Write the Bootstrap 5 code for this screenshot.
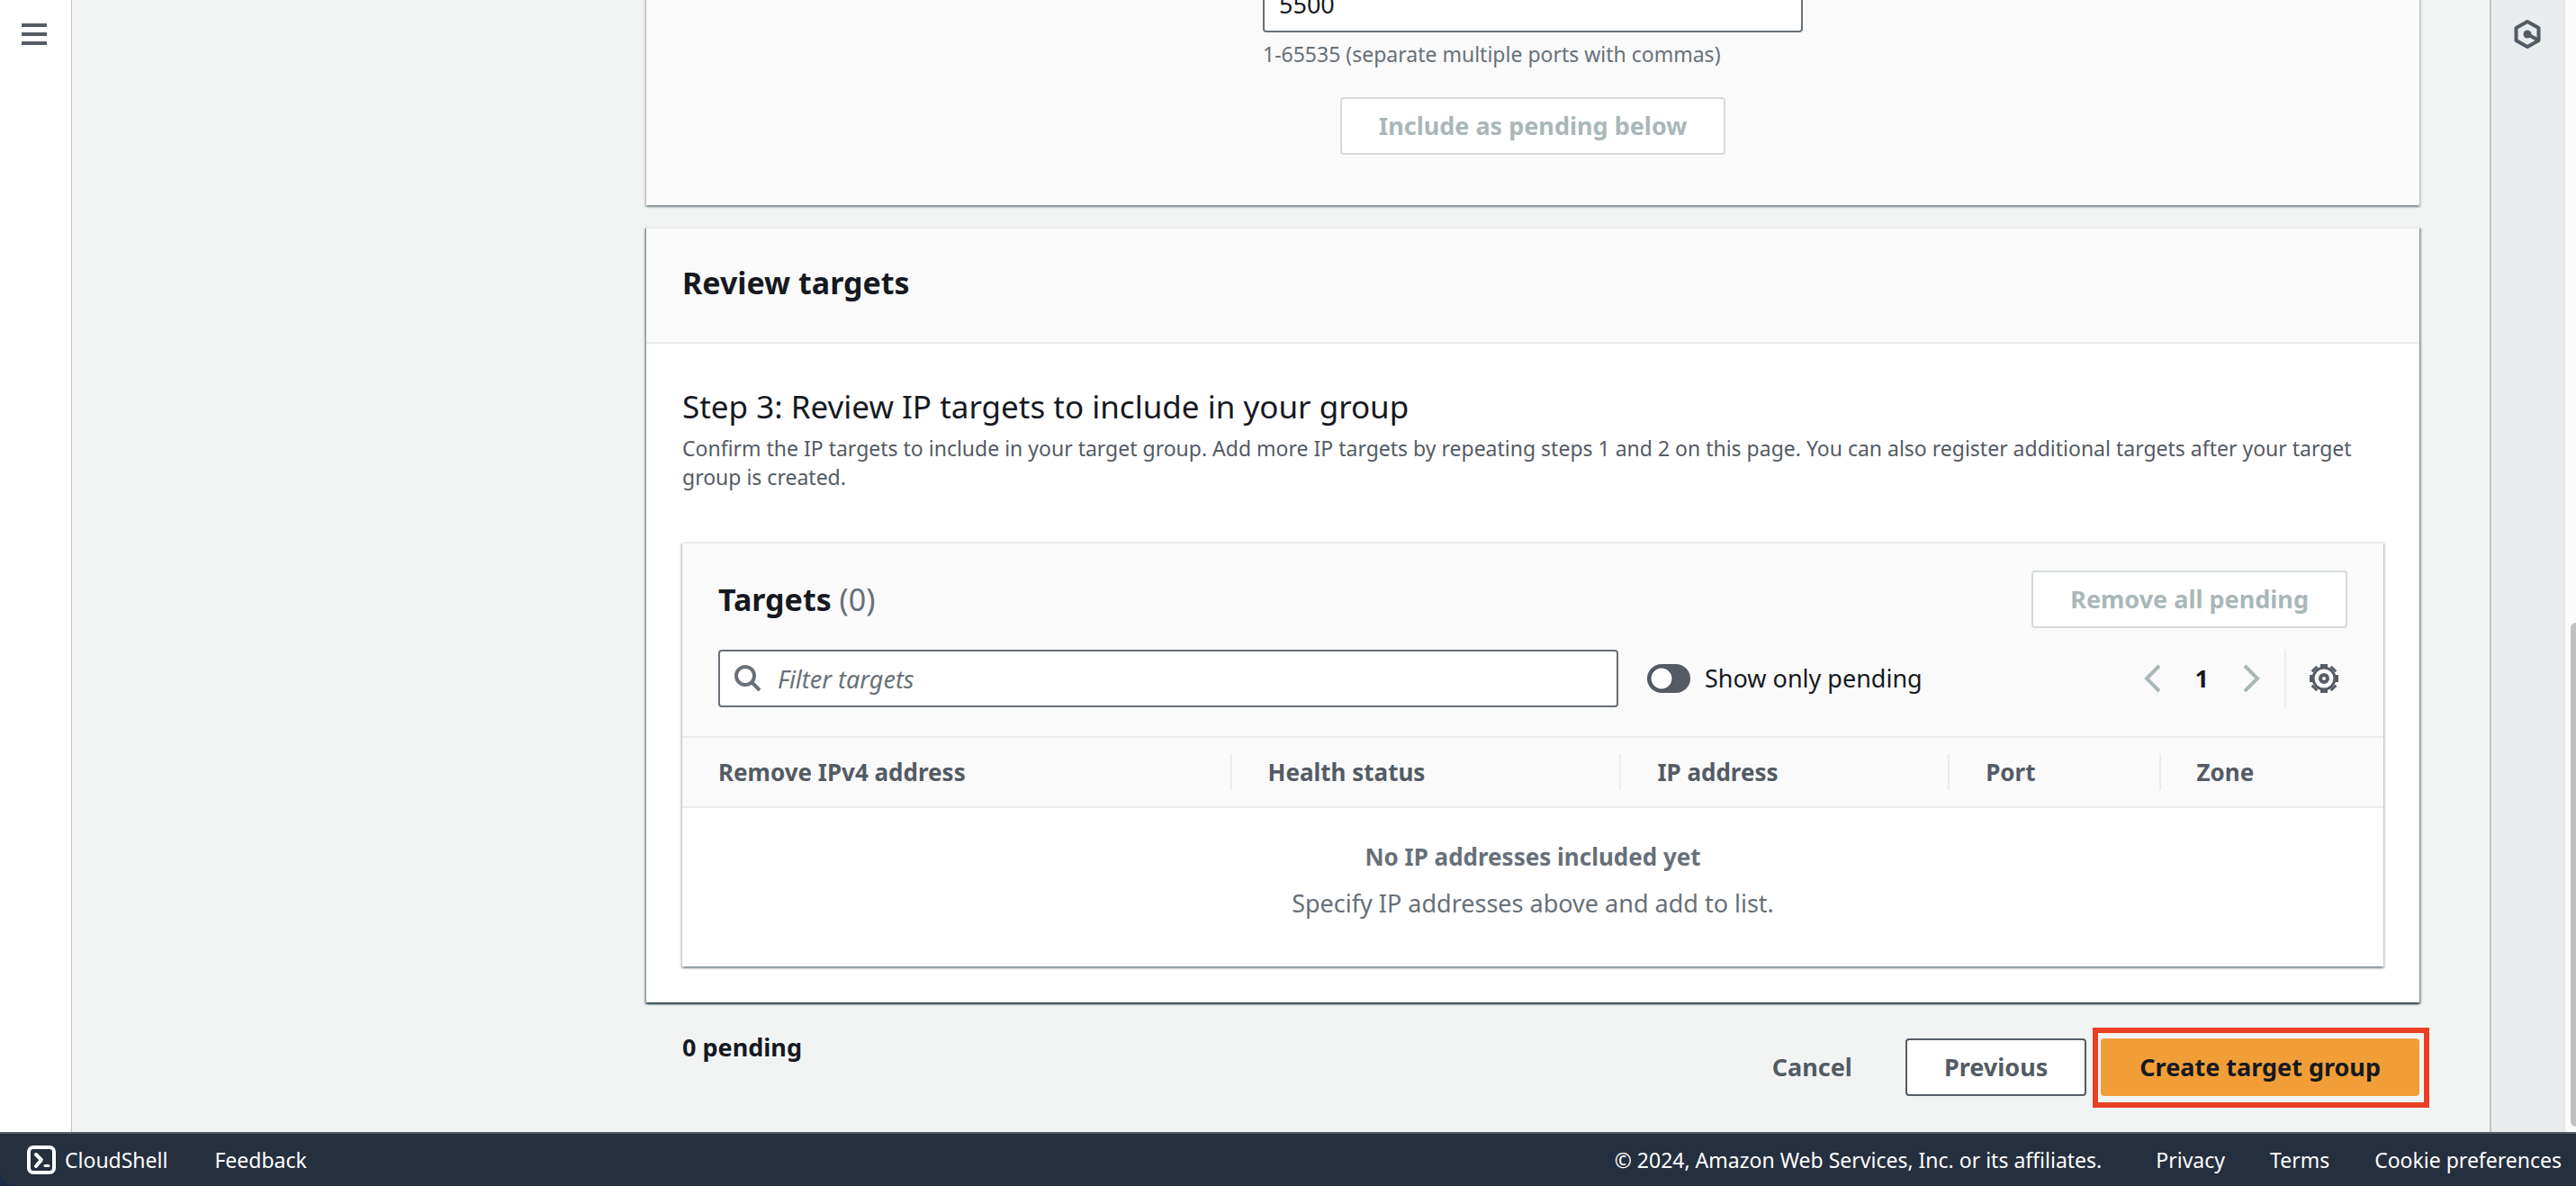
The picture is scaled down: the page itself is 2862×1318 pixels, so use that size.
<!DOCTYPE html>
<html lang="en">
<head>
<meta charset="utf-8">
<meta name="viewport" content="width=device-width, initial-scale=1">
<title>Create target group | EC2</title>
<link href="https://cdn.jsdelivr.net/npm/bootstrap@5.3.0/dist/css/bootstrap.min.css" rel="stylesheet">
<style>
  :root { --ink: #16191f; --slate: #545b64; --muted-ink: #687078; --line: #eaeded; --off: #aab7b8; }
  body { font-family: "Noto Sans", "Open Sans", sans-serif; font-size: 27px; line-height: 40px; color: var(--ink); background: #f2f4f4; }
  h2, h3 { font-size: 34px; line-height: 44px; margin: 0; }
  svg { display: block; flex: none; }

  .rail-left { flex: 0 0 80px; background: #fff; border-right: 1px solid #bcc2c3; padding: 22px 0 0 22px; }
  .rail-right { flex: 0 0 82px; background: #eaeded; border-left: 2px solid #c3c8c8; padding: 20px 0 0 24px; }
  .scroll-track { flex: 0 0 14px; background: #fafafa; border-left: 2px solid #e8e8e8; padding: 692px 0 6px 6px; }
  .scroll-thumb { height: 100%; background: #c1c1c1; border-radius: 8px 0 0 8px; }
  .icon-btn { border: 0; padding: 0; background: none; color: var(--slate); display: block; }

  .steps-space { flex: 0 0 560px; }
  .wizard { padding: 0 78px 40px 78px; }

  .panel { background: #fff; border-top: 2px solid var(--line);
    box-shadow: 0 2px 2px rgba(0,28,36,.3), 2px 2px 2px rgba(0,28,36,.15), -2px 2px 2px rgba(0,28,36,.15); }
  .panel-deep { box-shadow: 0 2px 2px rgba(0,28,36,.5), 2px 2px 2px rgba(0,28,36,.3), -2px 2px 2px rgba(0,28,36,.3), 0 1px 1px rgba(0,28,36,.4); }
  .panel-tint { background: #fafafa; }
  .panel-top { background: #fafafa; border-bottom: 2px solid var(--line); }

  .aws-field { height: 64px; border: 2px solid var(--muted-ink); border-radius: 4px; background: #fff; color: var(--ink); font-size: 27px; padding: 0 16px; }
  .port-box { width: 600px; }
  .hint { font-size: 23px; line-height: 32px; color: var(--muted-ink); }
  .lede { font-size: 23px; line-height: 32px; color: var(--slate); padding-top: 8px; }
  .step-title { font-size: 35px; }

  .aws-btn { height: 64px; border: 2px solid var(--slate); border-radius: 4px; background: #fff; color: var(--slate); font-size: 27px; line-height: 40px; font-weight: 700; padding: 10px 41px; white-space: nowrap; }
  .aws-btn:disabled { background: #fff; border-color: #d5dbdb; color: var(--off); opacity: 1; }
  .aws-btn-plain { background: none; border-color: transparent; }
  .aws-btn-main { background: #f19e38; border-color: #f19e38; color: var(--ink); }
  .spotlight { position: relative; }
  .spotlight::after { content: ""; position: absolute; inset: -14px -13px -15px -11px; border: 6px solid #ea4025; pointer-events: none; }

  .include-row { padding: 32px 0 56px; }
  .review-head { padding: 38px 40px 44px; }
  .review-body { padding: 48px 40px 40px; }
  .targets-panel { margin-top: 56px; }
  .targets-head { padding: 30px 40px 32px; }
  .count { color: var(--muted-ink); }
  .filter-row { padding-top: 24px; }

  .search-wrap { flex: 0 0 1000px; }
  .search-wrap .aws-field { padding-left: 64px; width: 100%; }
  .search-wrap .aws-field::placeholder { color: var(--muted-ink); font-style: italic; opacity: 1; }
  .search-wrap svg { position: absolute; left: 18px; top: 17px; color: var(--muted-ink); }

  .pending-switch { min-height: 0; padding: 0; margin: 0 0 0 32px; gap: 16px; }
  .pending-switch .form-check-input { width: 48px; height: 32px; margin: 0; border: 0; border-radius: 16px; float: none; box-shadow: none;
    background: radial-gradient(circle at 16px 16px, #fff 11px, #414750 12px, transparent 13px) var(--slate); }
  .pager { color: var(--off); }
  .page-no { padding: 0 38px; }
  .gear-side { border-left: 2px solid var(--line); height: 64px; padding: 16px 10px 0 26px; margin-left: 26px; }

  .target-table { width: 100%; table-layout: fixed; border-collapse: collapse; font-size: 26px; }
  .target-table th { background: #fafafa; color: var(--slate); padding: 18px 0; line-height: 40px; border-bottom: 2px solid var(--line); }
  .target-table th div { padding-left: 40px; }
  .target-table th + th div { border-left: 2px solid var(--line); }
  .target-table td { text-align: center; color: var(--muted-ink); padding: 34px 0 50px; }
  .empty-note { padding-top: 12px; font-size: 27px; }

  .wizard-actions { padding-top: 40px; }
  .pending-count { padding-left: 40px; margin-top: -10px; }

  .page-shell { background: #1c2a4a; }
  .page-body { background: #f2f4f4; }
  .console-foot { background: #262f3e; border-top: 2px solid var(--slate); border-bottom-left-radius: 16px; height: 60px; font-size: 23px; line-height: 32px; color: #fff; padding: 0 16px 0 30px; }
  .console-foot a { color: #fff; text-decoration: none; }
  .shell-link { gap: 10px; }
  .feedback-link { margin-left: 52px; }
  .legal { gap: 50px; }
  .copyright { padding-right: 10px; }
</style>
</head>
<body>
<div class="page-shell d-flex flex-column vh-100 overflow-hidden">
  <div class="page-body d-flex flex-grow-1 overflow-hidden">
    <nav class="rail-left">
      <button type="button" class="icon-btn" aria-label="Open navigation">
        <svg width="32" height="32" viewBox="0 0 32 32" fill="currentColor"><path d="M2 4h28v4H2zM2 14h28v4H2zM2 24h28v4H2z"/></svg>
      </button>
    </nav>

    <main class="d-flex flex-grow-1 overflow-hidden">
      <div class="steps-space"></div>
      <div class="wizard flex-grow-1 d-flex flex-column justify-content-end">

        <section class="panel panel-tint d-flex flex-column align-items-center flex-shrink-0">
          <div>
            <input class="aws-field port-box d-block" type="text" value="5500" aria-label="Ports">
            <div class="hint pt-2">1-65535 (separate multiple ports with commas)</div>
          </div>
          <div class="include-row"><button type="button" class="btn aws-btn" disabled>Include as pending below</button></div>
        </section>

        <section class="panel panel-deep mt-4 flex-shrink-0">
          <header class="panel-top review-head"><h2 class="fw-bold">Review targets</h2></header>
          <div class="review-body">
            <h3 class="fw-normal step-title">Step 3: Review IP targets to include in your group</h3>
            <p class="lede mb-0">Confirm the IP targets to include in your target group. Add more IP targets by repeating steps 1 and 2 on this page. You can also register additional targets after your target group is created.</p>

            <div class="panel targets-panel">
              <div class="panel-top targets-head">
                <div class="d-flex justify-content-between align-items-center">
                  <h3 class="fw-bold">Targets <span class="fw-normal count">(0)</span></h3>
                  <button type="button" class="btn aws-btn" disabled>Remove all pending</button>
                </div>
                <div class="d-flex align-items-center filter-row">
                  <div class="search-wrap position-relative">
                    <svg width="30" height="30" viewBox="0 0 30 30" fill="none" stroke="currentColor" stroke-width="4"><circle cx="12" cy="12" r="10"/><path d="M19 19l9 9"/></svg>
                    <input class="aws-field" type="search" placeholder="Filter targets" aria-label="Filter targets">
                  </div>
                  <div class="form-check form-switch pending-switch d-flex align-items-center">
                    <input class="form-check-input" type="checkbox" role="switch" id="onlyPending">
                    <label class="form-check-label" for="onlyPending">Show only pending</label>
                  </div>
                  <div class="d-flex align-items-center ms-auto">
                    <button type="button" class="icon-btn pager" aria-label="Previous page"><svg width="20" height="32" viewBox="0 0 20 32" fill="none" stroke="currentColor" stroke-width="4"><path d="M18 2L4 16l14 14"/></svg></button>
                    <span class="fw-bold page-no">1</span>
                    <button type="button" class="icon-btn pager" aria-label="Next page"><svg width="20" height="32" viewBox="0 0 20 32" fill="none" stroke="currentColor" stroke-width="4"><path d="M2 2l14 14L2 30"/></svg></button>
                    <div class="gear-side">
                      <button type="button" class="icon-btn" aria-label="Preferences">
                        <svg width="32" height="32" viewBox="0 0 32 32" fill="none" stroke="currentColor" stroke-width="4"><path d="M16 0v4M16 28v4M0 16h4M28 16h4M4.500 4.500l2 2M25.500 25.500l2 2M4.500 27.500l2-2M25.500 6.500l2-2" stroke-width="8"/><circle cx="16" cy="16" r="12" stroke-width="3"/><circle cx="16" cy="16" r="4"/></svg>
                      </button>
                    </div>
                  </div>
                </div>
              </div>
              <table class="target-table">
                <colgroup><col style="width:32.200%"><col style="width:22.900%"><col style="width:19.300%"><col style="width:12.400%"><col></colgroup>
                <thead><tr><th scope="col"><div>Remove IPv4 address</div></th><th scope="col"><div>Health status</div></th><th scope="col"><div>IP address</div></th><th scope="col"><div>Port</div></th><th scope="col"><div>Zone</div></th></tr></thead>
                <tbody><tr><td colspan="5"><div class="fw-bold">No IP addresses included yet</div><div class="empty-note">Specify IP addresses above and add to list.</div></td></tr></tbody>
              </table>
            </div>
          </div>
        </section>

        <div class="d-flex align-items-start wizard-actions flex-shrink-0">
          <div class="fw-bold pending-count">0 pending</div>
          <div class="d-flex gap-3 ms-auto">
            <button type="button" class="btn aws-btn aws-btn-plain">Cancel</button>
            <button type="button" class="btn aws-btn">Previous</button>
            <button type="button" class="btn aws-btn aws-btn-main spotlight">Create target group</button>
          </div>
        </div>
      </div>
    </main>

    <aside class="rail-right">
      <button type="button" class="icon-btn" aria-label="Amazon Q">
        <svg width="32" height="36" viewBox="0 0 32 36" fill="none" stroke="currentColor" stroke-width="4"><path d="M16 4l12.500 7v14L16 32 3.500 25V11z" stroke-linejoin="round"/><path d="M16 18l12 6.500"/><circle cx="16" cy="18" r="4.500" fill="currentColor" stroke="none"/></svg>
      </button>
    </aside>
    <div class="scroll-track"><div class="scroll-thumb"></div></div>
  </div>

  <footer class="console-foot d-flex align-items-center flex-shrink-0">
    <a href="#" class="d-flex align-items-center shell-link">
      <svg width="32" height="32" viewBox="0 0 32 32" fill="none" stroke="#fff" stroke-width="4" stroke-linecap="round" stroke-linejoin="round"><rect x="2" y="2" width="28" height="28" rx="5"/><path d="M10 10l6 6-6 7"/><path d="M20 22.500h4" stroke-width="3"/></svg>
      <span>CloudShell</span>
    </a>
    <a href="#" class="feedback-link">Feedback</a>
    <div class="d-flex ms-auto legal">
      <span class="copyright">© 2024, Amazon Web Services, Inc. or its affiliates.</span>
      <a href="#">Privacy</a>
      <a href="#">Terms</a>
      <a href="#">Cookie preferences</a>
    </div>
  </footer>
</div>
<script src="https://cdn.jsdelivr.net/npm/bootstrap@5.3.0/dist/js/bootstrap.bundle.min.js"></script>
</body>
</html>
